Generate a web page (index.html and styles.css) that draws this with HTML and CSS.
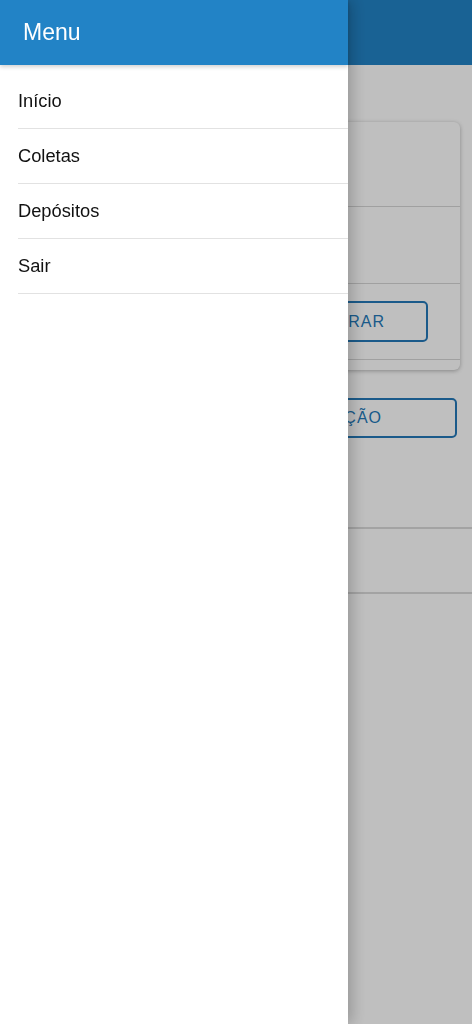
FILE: index.html
```html
<!DOCTYPE html>
<html lang="pt">
<head>
<meta charset="utf-8">
<link rel="stylesheet" href="styles.css">
</head>
<body>
<div class="page">
  <header class="topbar"></header>
  <main class="content">
    <section class="card">
      <div class="card-row card-row-1"></div>
      <div class="card-row card-row-2"></div>
      <div class="card-row card-row-3"><button class="btn btn-card">DECLARAR</button></div>
      <div class="card-row card-row-4"></div>
    </section>
    <div class="action"><button class="btn btn-wide">NOVA SOLICITAÇÃO</button></div>
    <ul class="list">
      <li class="list-item"></li>
      <li class="list-item"></li>
    </ul>
  </main>
</div>
<div class="overlay"></div>
<nav class="drawer">
  <div class="drawer-header"><span class="drawer-title">Menu</span></div>
  <ul class="menu">
    <li class="menu-item">Início</li>
    <li class="menu-item">Coletas</li>
    <li class="menu-item">Depósitos</li>
    <li class="menu-item">Sair</li>
  </ul>
</nav>
</body>
</html>
```
FILE: styles.css
```css
* { box-sizing: border-box; }
html, body { margin: 0; padding: 0; height: 100%; }
body {
  font-family: "Liberation Sans", Roboto, sans-serif;
  background: #ffffff;
  overflow: hidden;
}
.page { min-height: 1024px; background: #ffffff; }
.topbar {
  height: 65px;
  background: #2283c6;
}
.content { padding: 57px 12px 0 12px; }
.card {
  background: #ffffff;
  border-radius: 6px;
  box-shadow: 0 1px 4px rgba(0,0,0,0.3);
  width: 448px;
  height: 248px;
  display: flex;
  flex-direction: column;
}
.card-row { border-bottom: 1px solid #d6d6d6; }
.card-row-1 { height: 85px; }
.card-row-2 { height: 77px; }
.card-row-3 { height: 76px; display: flex; align-items: center; justify-content: flex-end; padding-right: 32px; }
.card-row-4 { flex: 1; border-bottom: none; }
.btn {
  font-family: "Liberation Sans", Roboto, sans-serif;
  background: transparent;
  border: 2px solid #2479b8;
  border-radius: 5px;
  color: #2479b8;
  font-size: 16px;
  letter-spacing: 1px;
  display: flex;
  align-items: center;
  justify-content: flex-end;
}
.btn-card { width: 300px; height: 41px; padding-right: 41px; }
.action { display: flex; justify-content: flex-end; padding-top: 28px; padding-right: 3px; }
.btn-wide { width: 380px; height: 40px; padding-right: 73px; }
.list { list-style: none; margin: 0 -12px; padding: 0; margin-top: 89px; }
.list-item { height: 65px; border-top: 2px solid #dadada; }

.overlay {
  position: fixed;
  inset: 0;
  background: rgba(0,0,0,0.25);
}
.drawer {
  position: fixed;
  top: 0;
  left: 0;
  bottom: 0;
  width: 348px;
  background: #ffffff;
  box-shadow: 4px 0 14px rgba(0,0,0,0.22);
}
.drawer-header {
  height: 65px;
  background: #2283c6;
  display: flex;
  align-items: center;
  padding-left: 23px;
  box-shadow: 0 2px 4px rgba(0,0,0,0.18);
  position: relative;
}
.drawer-title { color: #ffffff; font-size: 23px; }
.menu { list-style: none; margin: 0; padding: 9px 0 0 18px; }
.menu-item {
  height: 55px;
  display: flex;
  align-items: center;
  font-size: 18.3px;
  color: #111111;
  border-bottom: 1px solid #e2e2e2;
}
```
